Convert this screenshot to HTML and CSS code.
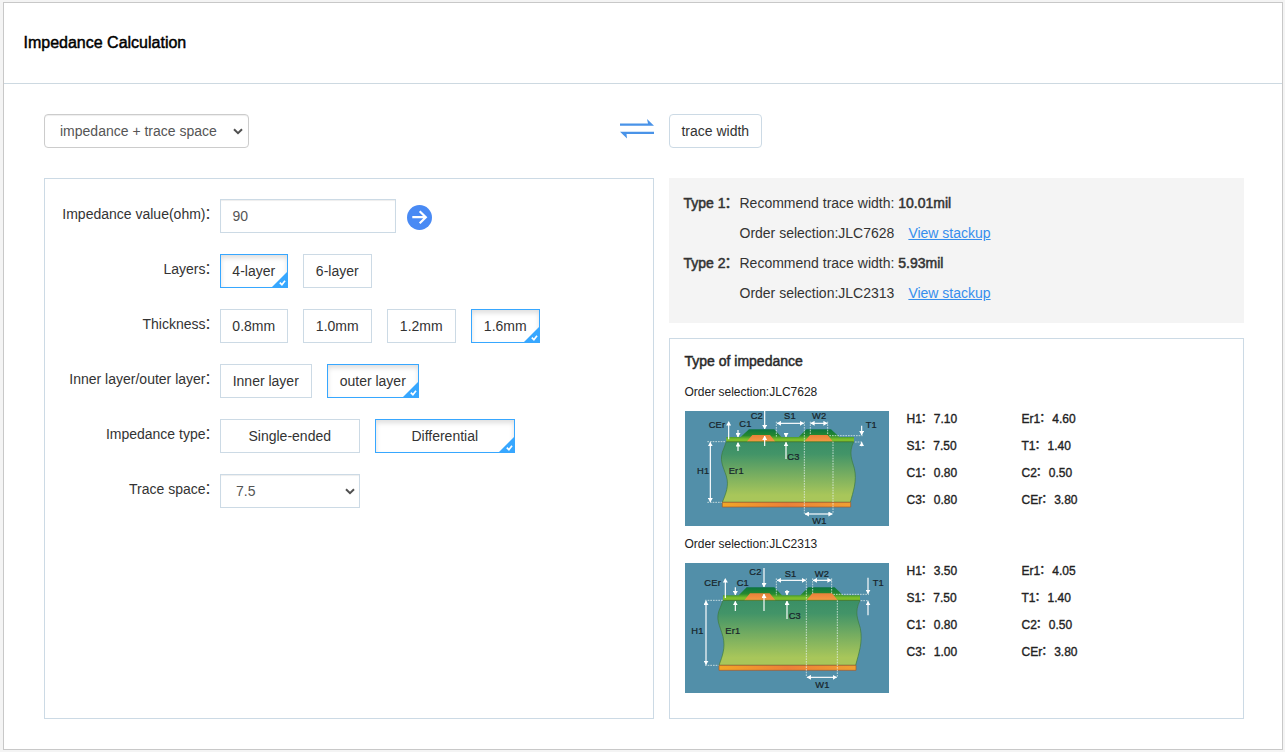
FILE: index.html
```html
<!DOCTYPE html>
<html lang="en">
<head>
<meta charset="utf-8">
<title>Impedance Calculation</title>
<link rel="stylesheet" href="styles.css">
</head>
<body>
<svg width="0" height="0" class="defs">
  <defs>
    <linearGradient id="core" x1="0" y1="0" x2="0" y2="1"><stop offset="0" stop-color="#3a8f66"/><stop offset=".2" stop-color="#429468"/><stop offset=".55" stop-color="#78ae60"/><stop offset=".88" stop-color="#a8c65a"/><stop offset="1" stop-color="#a9c65a"/></linearGradient>
    <linearGradient id="mask" x1="0" y1="0" x2="0" y2="1"><stop offset="0" stop-color="#0c7440"/><stop offset=".5" stop-color="#26892f"/><stop offset=".8" stop-color="#7cbd2b"/><stop offset="1" stop-color="#7cbf2c"/></linearGradient>
    <linearGradient id="copper" x1="0" y1="0" x2="0" y2="1"><stop offset="0" stop-color="#e9803a"/><stop offset="1" stop-color="#f29a42"/></linearGradient>
    <linearGradient id="plane" x1="0" y1="0" x2="1" y2="0"><stop offset="0" stop-color="#f3a627"/><stop offset=".5" stop-color="#ec8038"/><stop offset="1" stop-color="#f0a032"/></linearGradient>
    <marker id="tip" viewBox="0 0 12 14" refX="11" refY="7" markerWidth="13" markerHeight="15" markerUnits="userSpaceOnUse" orient="auto-start-reverse"><path d="M0 0L12 7L0 14Z" fill="#fff"/></marker>
    <symbol id="tick" viewBox="0 0 17 17"><path d="M17 0V17H0Z" fill="#37a7ff"/><path d="M8.8 11.7L10.9 13.7L14 9.7" fill="none" stroke="#fff" stroke-width="1.7"/></symbol>
    <symbol id="chevron" viewBox="0 0 10 7"><path d="M1 1.3L5 5.2L9 1.3" fill="none" stroke="#505050" stroke-width="2"/></symbol>
  </defs>
</svg>
<main class="card">
  <header class="card-header"><h1 class="title">Impedance Calculation</h1></header>
  <div class="modes">
    <div class="select select-mode"><span>impedance + trace space</span><svg class="chevron"><use href="#chevron"/></svg></div>
    <svg class="swap" viewBox="0 0 34 20"><g fill="#4993e8"><path d="M0 4.6H28L27 0L34 6.8H0Z"/><path d="M34 12.8V15H6.5L7 19.5L0 12.8Z"/></g></svg>
    <div class="target">trace width</div>
  </div>
  <div class="columns">
    <section class="form">
      <div class="row"><label class="label">Impedance value(ohm)<span class="colon">：</span></label><div class="input">90</div>
        <svg class="go" viewBox="0 0 25 25"><circle cx="12.5" cy="12.5" r="12.5" fill="#498af4"/><path d="M5.3 12.2H18.5M12.7 6.2L18.8 12.2L12.7 18.2" fill="none" stroke="#fff" stroke-width="2.2"/></svg></div>
      <div class="row"><span class="label">Layers<span class="colon">：</span></span><div class="options"><div class="opt size first on">4-layer<svg class="tick"><use href="#tick"/></svg></div><div class="opt size">6-layer</div></div></div>
      <div class="row"><span class="label">Thickness<span class="colon">：</span></span><div class="options"><div class="opt size first">0.8mm</div><div class="opt size">1.0mm</div><div class="opt size">1.2mm</div><div class="opt size on">1.6mm<svg class="tick"><use href="#tick"/></svg></div></div></div>
      <div class="row"><span class="label">Inner layer/outer layer<span class="colon">：</span></span><div class="options"><div class="opt side">Inner layer</div><div class="opt side on">outer layer<svg class="tick"><use href="#tick"/></svg></div></div></div>
      <div class="row"><span class="label">Impedance type<span class="colon">：</span></span><div class="options"><div class="opt kind">Single-ended</div><div class="opt kind on">Differential<svg class="tick"><use href="#tick"/></svg></div></div></div>
      <div class="row"><span class="label">Trace space<span class="colon">：</span></span><div class="select select-space"><span>7.5</span><svg class="chevron"><use href="#chevron"/></svg></div></div>
    </section>
    <div class="results">
      <section class="summary">
        <div class="type"><b class="strong">Type 1<span class="colon">：</span></b><div class="lines"><p>Recommend trace width: <b class="strong">10.01mil</b></p><p>Order selection:JLC7628<a class="link">View stackup</a></p></div></div>
        <div class="type"><b class="strong">Type 2<span class="colon">：</span></b><div class="lines"><p>Recommend trace width: <b class="strong">5.93mil</b></p><p>Order selection:JLC2313<a class="link">View stackup</a></p></div></div>
      </section>
      <section class="details">
        <h2 class="subtitle">Type of impedance</h2>
        <p class="order">Order selection:JLC7628</p>
        <div class="stack">
          <svg class="diagram" width="204" height="115" viewBox="15 18 612 345">
            <rect x="15" y="18" width="612" height="345" fill="#528fa9"/>
            <path d="M139 110H521C505 145 516 164 523 190C532 228 519 260 511 292H127C137 266 148 244 139 213C130 185 115 164 132 129Z" fill="url(#core)" stroke="#3c793b" stroke-width="2"/>
            <path d="M139 96H182L207 73H283L304 96H356L379 73H453L478 96H522V110H139Z" fill="url(#mask)"/>
            <path d="M200 110L217 90H270L286 110ZM373 110L390 90H443L459 110Z" fill="url(#copper)"/>
            <path d="M139 110H521" stroke="#43732a" stroke-width="2"/>
            <path d="M127 292H512V306H127Z" fill="url(#plane)" stroke="#a4582c" stroke-width="2"/>
            <g class="guide"><path d="M289 50V97M373 50V326M459 110V326M391 50V90M443 50V90M448 92H548M525 111H548M82 110H137M82 292H125"/></g>
            <g class="arrow"><path d="M146 103V50"/><path d="M254 18V72"/><path d="M318 84V96"/><path d="M174 75V96"/><path d="M174 138V113"/><path d="M254 123V93"/><path d="M318 162V112"/><path d="M545 62V90"/><path d="M545 124V112"/></g>
            <g class="arrow double"><path d="M91 112V291"/><path d="M291 55H371"/><path d="M392 55H442"/><path d="M375 327H457"/></g>
            <g class="caption"><text x="86" y="68">CEr</text><text x="178" y="67">C1</text><text x="212" y="42">C2</text><text x="312" y="43">S1</text><text x="396" y="43">W2</text><text x="557" y="68">T1</text><text x="322" y="165">C3</text><text x="51" y="206">H1</text><text x="146" y="206">Er1</text><text x="397" y="356">W1</text></g>
          </svg>
          <div class="values"><span>H1<span class="colon">：</span>7.10</span><span>Er1<span class="colon">：</span>4.60</span><span>S1<span class="colon">：</span>7.50</span><span>T1<span class="colon">：</span>1.40</span><span>C1<span class="colon">：</span>0.80</span><span>C2<span class="colon">：</span>0.50</span><span>C3<span class="colon">：</span>0.80</span><span>CEr<span class="colon">：</span>3.80</span></div>
        </div>
        <p class="order">Order selection:JLC2313</p>
        <div class="stack">
          <svg class="diagram" width="204" height="130" viewBox="15 24 612 390">
            <rect x="15" y="24" width="612" height="390" fill="#528fa9"/>
            <path d="M129 136H540C522 172 534 194 541 220C549 262 536 295 527 331H117C127 303 137 279 129 245C120 211 104 192 121 157Z" fill="url(#core)" stroke="#3c793b" stroke-width="2"/>
            <path d="M129 121H176L200 97H283L306 121H361L385 97H464L489 121H540V136H129Z" fill="url(#mask)"/>
            <path d="M193 136L210 115H269L286 136ZM380 136L397 115H456L473 136Z" fill="url(#copper)"/>
            <path d="M129 136H540" stroke="#43732a" stroke-width="2"/>
            <path d="M117 331H528V346H117Z" fill="url(#plane)" stroke="#a4582c" stroke-width="2"/>
            <g class="guide"><path d="M289 70V121M379 70V367M472 136V367M398 70V115M455 70V115M460 118H567M542 137H567M75 136H128M75 331H116"/></g>
            <g class="arrow"><path d="M136 129V71"/><path d="M252 39V96"/><path d="M321 105V120"/><path d="M166 97V120"/><path d="M166 168V139"/><path d="M252 168V117"/><path d="M321 192V138"/><path d="M564 68V116"/><path d="M564 181V139"/></g>
            <g class="arrow double"><path d="M78 138V329"/><path d="M291 76H377"/><path d="M399 76H454"/><path d="M381 367H470"/></g>
            <g class="caption"><text x="73" y="93">CEr</text><text x="170" y="92">C1</text><text x="208" y="61">C2</text><text x="314" y="65">S1</text><text x="404" y="65">W2</text><text x="578" y="92">T1</text><text x="326" y="193">C3</text><text x="34" y="238">H1</text><text x="136" y="238">Er1</text><text x="406" y="399">W1</text></g>
          </svg>
          <div class="values"><span>H1<span class="colon">：</span>3.50</span><span>Er1<span class="colon">：</span>4.05</span><span>S1<span class="colon">：</span>7.50</span><span>T1<span class="colon">：</span>1.40</span><span>C1<span class="colon">：</span>0.80</span><span>C2<span class="colon">：</span>0.50</span><span>C3<span class="colon">：</span>1.00</span><span>CEr<span class="colon">：</span>3.80</span></div>
        </div>
      </section>
    </div>
  </div>
</main>
</body>
</html>
```
FILE: styles.css
```css
* { box-sizing: border-box; }
body { margin: 0; padding: 2px 2px 2px 3px; height: 752px; overflow: hidden; background: #f4f4f4; color: #333; font: 14px/20px "Liberation Sans", Arial, "Noto Sans CJK SC", sans-serif; text-indent: -.5px; }
p, h1, h2 { margin: 0; font-weight: normal; }
.defs { position: absolute; }
.card { height: 748px; border: 1px solid #c8c8c8; background: #fff; }
.card-header { height: 81px; padding: 30px 20px; border-bottom: 1px solid #cdd9e1; }
.title { font-size: 16px; line-height: 20px; color: #000; -webkit-text-stroke: .45px #000; }
.modes { display: flex; height: 34px; margin: 30px 0 30px 40px; }
.select { display: flex; align-items: center; justify-content: space-between; height: 34px; border: 1px solid #ccdae5; color: #555; background: #fff; box-shadow: inset 0 1px 1px rgba(0,0,0,.07); }
.select-mode { width: 205px; padding: 0 5px 0 15.5px; border-color: #ccc; border-radius: 4px; }
.select-space { width: 140px; padding: 0 4px 0 15.5px; }
.chevron { width: 10px; height: 7px; }
.swap { width: 34px; height: 20px; margin: 5px 15px 0 371px; }
.target { width: 93px; height: 34px; border: 1px solid #ccdae5; border-radius: 4px; text-align: center; line-height: 32px; }
.columns { display: flex; gap: 15px; margin-left: 40px; height: 541px; }
.form { width: 610px; border: 1px solid #ccdae5; padding: 20px 0; display: flex; flex-direction: column; gap: 21px; }
.row { display: flex; height: 34px; }
.label { width: 175px; padding-right: .5px; text-align: right; line-height: 30px; white-space: nowrap; }
.colon { margin: 0 1px 0 -1px; vertical-align: 1px; line-height: 1; }
.input { width: 176px; border: 1px solid #ccdae5; padding-left: 12px; line-height: 32px; color: #555; box-shadow: inset 0 1px 1px rgba(0,0,0,.07); }
.go { width: 25px; height: 25px; margin: 6px 0 0 11px; }
.options { display: flex; gap: 15px; }
.opt { position: relative; height: 34px; border: 1px solid #ccdae5; text-align: center; line-height: 32px; white-space: nowrap; }
.size { width: 69px; }
.first { width: 68px; }
.side { width: 92px; }
.kind { width: 140px; }
.on { border-color: #37a7ff; box-shadow: inset 0 3px 5px rgba(0,0,0,.13); }
.tick { position: absolute; right: -1px; bottom: -1px; width: 17px; height: 17px; }
.results { width: 575px; display: flex; flex-direction: column; gap: 15px; }
.summary { height: 145px; padding: 10px 15px; background: #f4f4f4; line-height: 30px; }
.type { display: flex; height: 60px; }
.type > .strong { width: 56px; white-space: nowrap; }
.strong { font-weight: normal; -webkit-text-stroke: .5px #333; }
.link { margin-left: 14px; color: #368eed; text-decoration: underline; }
.details { height: 381px; border: 1px solid #ccdae5; padding: 12px 15px; color: #222; }
.subtitle { font-size: 14px; line-height: 20px; -webkit-text-stroke: .5px #333; }
.order { font-size: 12px; line-height: 20px; margin: 11px 0 9px; }
.stack { display: flex; gap: 18px; }
.stack + .order { margin: 8px 0 9px; }
.diagram { display: block; flex: none; text-indent: 0; }
.values { display: grid; grid-template-columns: 115px 100px; grid-auto-rows: 27px; height: 108px; margin-top: -5px; font-size: 12px; line-height: 27px; -webkit-text-stroke: .35px #222; white-space: nowrap; }
.guide path { fill: none; stroke: #e7f2ef; stroke-opacity: .75; stroke-width: 3; stroke-dasharray: 5 3; }
.arrow path { fill: none; stroke: #fff; stroke-width: 3.5; marker-end: url(#tip); }
.double path { marker-start: url(#tip); }
.caption { fill: #18252b; stroke: #18252b; stroke-width: .7; font-size: 28px; letter-spacing: .6px; }
```
